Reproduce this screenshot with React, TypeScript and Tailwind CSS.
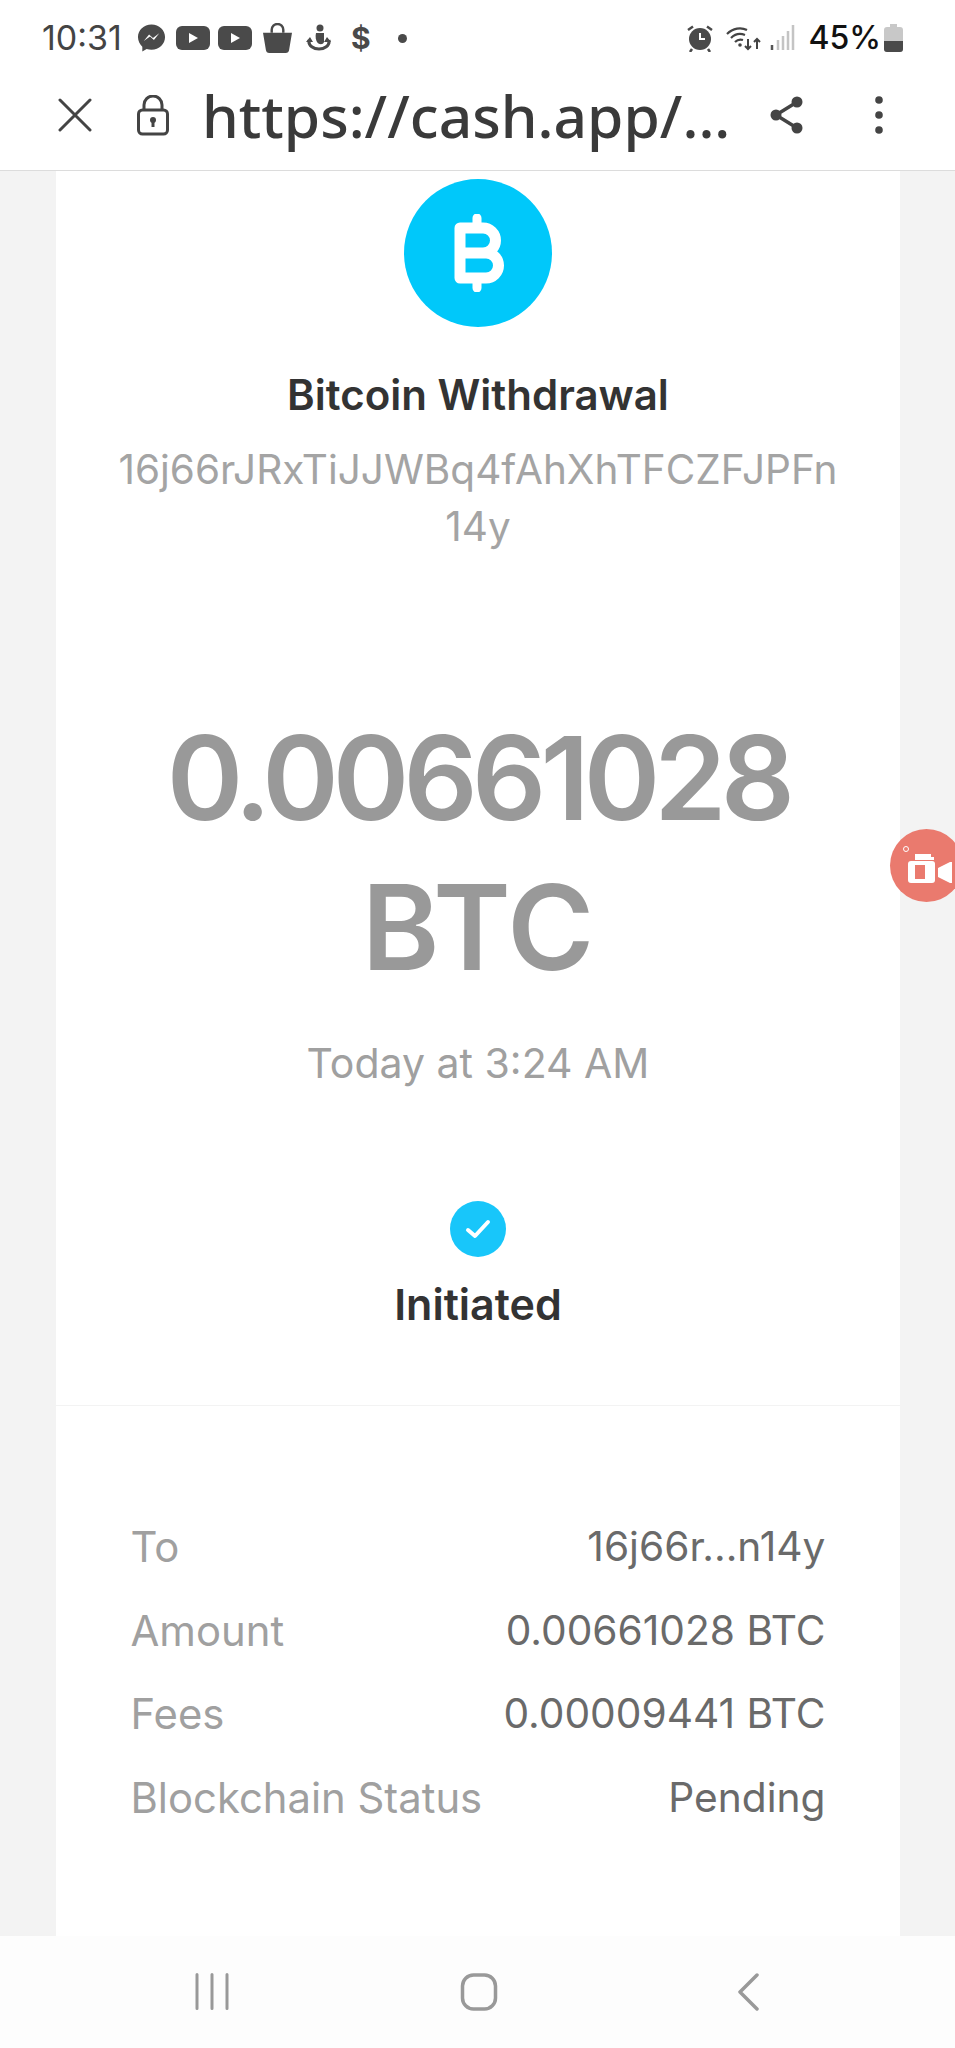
const font = "font-['Inter','Liberation_Sans',sans-serif]"

const rows = [
  { label: "To", value: "16j66r...n14y" },
  { label: "Amount", value: "0.00661028 BTC" },
  { label: "Fees", value: "0.00009441 BTC" },
  { label: "Blockchain Status", value: "Pending" },
]

const Play = () => (
  <svg width="34" height="24" viewBox="0 0 34 24">
    <rect width="34" height="24" rx="6" fill="#4a4a4a" />
    <path d="M13 7l9 5-9 5z" fill="#fff" />
  </svg>
)

const StatusBar = () => (
  <div className="flex h-[58px] items-center justify-between pl-[42px] pr-[52px] pt-[18px]">
    <div className="flex items-center">
      <span className="text-[34px] leading-none text-[#444]">10:31</span>
      <svg className="ml-[15px]" width="29" height="30" viewBox="0 0 30 30">
        <path d="M15 1C7 1 1 7 1 14c0 4 2 7.500 4.500 10v5l4.500-2.500c1.600.5 3.200.7 5 .7 8 0 14-6 14-13.200S23 1 15 1z" fill="#4a4a4a" />
        <path d="M7 18l5.500-6.500 4 3.500L23 10l-5.500 7-4-3.500z" fill="#fff" />
      </svg>
      <div className="ml-[10px] flex gap-[8px]">
        <Play />
        <Play />
      </div>
      <svg className="ml-[11px]" width="29" height="30" viewBox="0 0 30 31">
        <path d="M0 10h30l-3 18c-.3 2-1.500 3-3.500 3h-17c-2 0-3.200-1-3.500-3z" fill="#4a4a4a" />
        <path d="M9 10V7a6 6 0 0 1 12 0v3" fill="none" stroke="#4a4a4a" strokeWidth="2.500" />
      </svg>
      <svg className="ml-[14px]" width="25" height="28" viewBox="0 0 25 28">
        <circle cx="14" cy="4" r="3.500" fill="#4a4a4a" />
        <path d="M10 9h8v9c-1 3-5 3-7 0-1-2-2-5-1-9z" fill="#4a4a4a" />
        <path d="M3 16c-1 6 5 9 10 9s11-3 10-9" fill="none" stroke="#4a4a4a" strokeWidth="3" />
        <path d="M0 18l4-5 3 5zM25 18l-4-5-3 5z" fill="#4a4a4a" />
      </svg>
      <span className="ml-[20px] text-[30px] font-bold leading-none text-[#4a4a4a]">$</span>
      <span className="ml-[27px] size-[9px] rounded-full bg-[#4a4a4a]" />
    </div>
    <div className="flex items-center">
      <svg width="26" height="27" viewBox="0 0 26 27">
        <circle cx="13" cy="14" r="11" fill="#4a4a4a" />
        <path d="M13 8v6h5" fill="none" stroke="#fff" strokeWidth="2" />
        <path d="M1 5l5-3.500M25 5l-5-3.500M5 24l-2 3M21 24l2 3" stroke="#4a4a4a" strokeWidth="2.500" />
      </svg>
      <svg className="ml-[13px]" width="36" height="27" viewBox="0 0 36 27">
        <path d="M1 9c6-6 14-7 20-4M5 13c4-4 9-5 14-3M9 17c2-2 5-3 8-2" fill="none" stroke="#444" strokeWidth="2.200" />
        <circle cx="14" cy="20" r="1.800" fill="#444" />
        <path d="M22 14v10m-3-3l3 3 3-3M31 24V14m-3 3l3-3 3 3" fill="none" stroke="#444" strokeWidth="2" />
      </svg>
      <svg className="ml-[8px]" width="25" height="26" viewBox="0 0 25 26">
        <path d="M2 20v5" stroke="#555" strokeWidth="2.500" />
        <path d="M8 15v10M13 11v14M18 6v19M23 0v25" stroke="#c4c4c4" strokeWidth="2.500" />
      </svg>
      <span className="ml-[13px] text-[32px] leading-none font-medium text-[#111]">45%</span>
      <svg className="ml-[3px]" width="19" height="28" viewBox="0 0 19 28">
        <path d="M6 0h7v3h3c2 0 3 1 3 3v19c0 2-1 3-3 3H3c-2 0-3-1-3-3V6c0-2 1-3 3-3h3z" fill="#c8c8c8" />
        <path d="M0 17h19v8c0 2-1 3-3 3H3c-2 0-3-1-3-3z" fill="#4a4a4a" />
      </svg>
    </div>
  </div>
)

const UrlBar = () => (
  <div className="flex h-[113px] items-center border-b border-[#dcdcdc] pt-[2px]">
    <svg className="ml-[58px]" width="34" height="34" viewBox="0 0 34 34">
      <path d="M2 2l30 30M32 2L2 32" stroke="#444" strokeWidth="3" strokeLinecap="round" />
    </svg>
    <svg className="ml-[45px]" width="32" height="41" viewBox="0 0 32 41">
      <rect x="1.500" y="15" width="29" height="24" rx="4" fill="none" stroke="#444" strokeWidth="3" />
      <path d="M7 15V10a9 9 0 0 1 18 0v5" fill="none" stroke="#444" strokeWidth="3" />
      <circle cx="16" cy="25" r="3" fill="#444" />
      <path d="M16 26v6" stroke="#444" strokeWidth="3" />
    </svg>
    <span className="ml-[33px] font-['Noto_Sans',sans-serif] text-[58.700px] leading-none font-medium text-[#3a3a3a]">https://cash.app/...</span>
    <svg className="ml-[39px]" width="36" height="40" viewBox="0 0 36 40">
      <path d="M28 7L7 20l21 13" fill="none" stroke="#444" strokeWidth="3.500" />
      <circle cx="28" cy="7" r="5.500" fill="#444" />
      <circle cx="7" cy="20" r="5.500" fill="#444" />
      <circle cx="28" cy="33" r="5.500" fill="#444" />
    </svg>
    <svg className="ml-[69px]" width="10" height="40" viewBox="0 0 10 40">
      <circle cx="5" cy="5" r="3.800" fill="#444" />
      <circle cx="5" cy="20" r="3.800" fill="#444" />
      <circle cx="5" cy="35" r="3.800" fill="#444" />
    </svg>
  </div>
)

const BitcoinIcon = () => (
  <div className="flex size-[148px] items-center justify-center rounded-full bg-[#00c8fa]">
    <svg className="ml-[3px]" width="51" height="78" viewBox="0 0 51 78">
      <path d="M6 14h23a12.500 12.500 0 0 1 0 25H6zM6 39h26a12.500 12.500 0 0 1 0 25H6z" fill="none" stroke="#fff" strokeWidth="11" strokeLinejoin="round" />
      <path d="M23 4v8M23 66v8" stroke="#fff" strokeWidth="9" strokeLinecap="round" />
    </svg>
  </div>
)

const NavBar = () => (
  <div className="flex h-[112px] items-center bg-[#fdfdfd] pb-[1px]">
    <svg className="ml-[195px]" width="34" height="37" viewBox="0 0 34 37">
      <path d="M2 1.500v34M17 1.500v34M32 1.500v34" stroke="#999" strokeWidth="3" strokeLinecap="round" />
    </svg>
    <svg className="ml-[231px]" width="38" height="38" viewBox="0 0 38 38">
      <rect x="2.500" y="2" width="33" height="34" rx="11" fill="none" stroke="#999" strokeWidth="3.500" />
    </svg>
    <svg className="ml-[239px]" width="22" height="38" viewBox="0 0 22 38">
      <path d="M20 2L3 19l17 17" fill="none" stroke="#999" strokeWidth="3.500" strokeLinecap="round" strokeLinejoin="round" />
    </svg>
  </div>
)

export default function App() {
  return (
    <div className={`${font} relative flex h-[2048px] w-[955px] flex-col overflow-hidden bg-white`}>
      <StatusBar />
      <UrlBar />

      <main className="min-h-0 flex-1 bg-[#f3f3f3] pl-[56px]">
        <section className="flex h-full w-[844px] flex-col items-center bg-white pt-[8px]">
          <BitcoinIcon />
          <h1 className="mt-[45px] text-[42px] leading-[46px] font-semibold text-[#333]">Bitcoin Withdrawal</h1>
          <p className="mt-[23px] w-[730px] text-center text-[40.500px] leading-[57px] break-all text-[#a4a4a4]">
            16j66rJRxTiJJWBq4fAhXhTFCZFJPFn 14y
          </p>

          <h2 className="mt-[149px] text-center text-[116px] leading-[149px] font-semibold text-[#999]">
            <span className="block tracking-[-5.800px]">0.00661028</span>
            <span className="block text-[118px]">BTC</span>
          </h2>

          <p className="mt-[36px] text-[41px] leading-[50px] text-[#a0a0a0]">Today at 3:24 AM</p>

          <div className="mt-[113px] flex size-[56px] items-center justify-center rounded-full bg-[#18c6fa]">
            <svg width="28" height="22" viewBox="0 0 28 22">
              <path d="M4 12l7 6L24 4" fill="none" stroke="#fff" strokeWidth="4" strokeLinecap="round" strokeLinejoin="round" />
            </svg>
          </div>
          <p className="mt-[24px] text-[43px] leading-[46px] font-semibold text-[#333]">Initiated</p>

          <div className="mt-[78px] w-full border-t border-[#f3f3f3]" />

          <dl className="mt-[116px] flex w-[695px] flex-col gap-[33.500px] leading-[50px]">
            {rows.map((row) => (
              <div key={row.label} className="flex justify-between">
                <dt className="text-[41.800px] text-[#a0a0a0]">{row.label}</dt>
                <dd className="text-[40.700px] text-[#6a6a6a]">{row.value}</dd>
              </div>
            ))}
          </dl>
        </section>
      </main>

      <NavBar />

      <div className="absolute left-[890px] top-[829px] flex size-[73px] items-center rounded-full bg-[#ea7a6e] pl-[18px]">
        <span className="absolute left-[13px] top-[17px] size-[6px] rounded-full border border-white" />
        <svg className="mt-[6px] shrink-0" width="44" height="30" viewBox="0 0 44 30">
          <path d="M7 0h16v3h3v3H7z" fill="#fff" />
          <rect x="0" y="7" width="27" height="22" rx="3" fill="#fff" />
          <rect x="7" y="11" width="10" height="14" fill="#ea7a6e" />
          <path d="M30 14l12-6h2v21h-2l-12-6z" fill="#fff" />
        </svg>
      </div>
    </div>
  )
}
